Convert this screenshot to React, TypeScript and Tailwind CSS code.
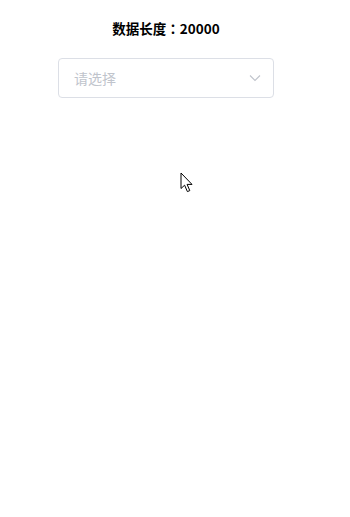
export default function App() {
  return (
    <div
      className="relative h-[517px] w-[350px] bg-white"
      style={{ fontFamily: '"Noto Sans CJK SC", "Noto Sans", sans-serif' }}
    >
      <div className="flex w-[332px] flex-col items-center pt-[18px]">
        <h2 className="text-[13.5px] font-bold leading-5 text-[#000]">
          数据长度<span style={{ fontFamily: '"Noto Sans CJK TC", sans-serif' }}>：</span>20000
        </h2>

        <div className="mt-5 flex h-10 w-[216px] items-center justify-between rounded border border-[#dcdfe6] bg-white pl-[15px] pr-[11px]">
          <span className="text-[14px] text-[#c0c4cc]">请选择</span>
          <svg className="h-[14px] w-[14px] text-[#c0c4cc]" viewBox="0 0 14 14" fill="none">
            <path d="M2 4.5 7 9.5 12 4.5" stroke="currentColor" strokeWidth="1.1" />
          </svg>
        </div>
      </div>

      {/* mouse pointer */}
      <svg
        className="absolute left-[180px] top-[172px] h-[22px] w-[14px]"
        viewBox="0 0 14 22"
      >
        <path
          d="M1 1 L1 16.5 L4.6 13.2 L7.4 19.6 L9.8 18.6 L7.1 12.4 L12 12.4 Z"
          fill="#fff"
          stroke="#000"
          strokeWidth="1"
          strokeLinejoin="round"
        />
      </svg>
    </div>
  );
}
